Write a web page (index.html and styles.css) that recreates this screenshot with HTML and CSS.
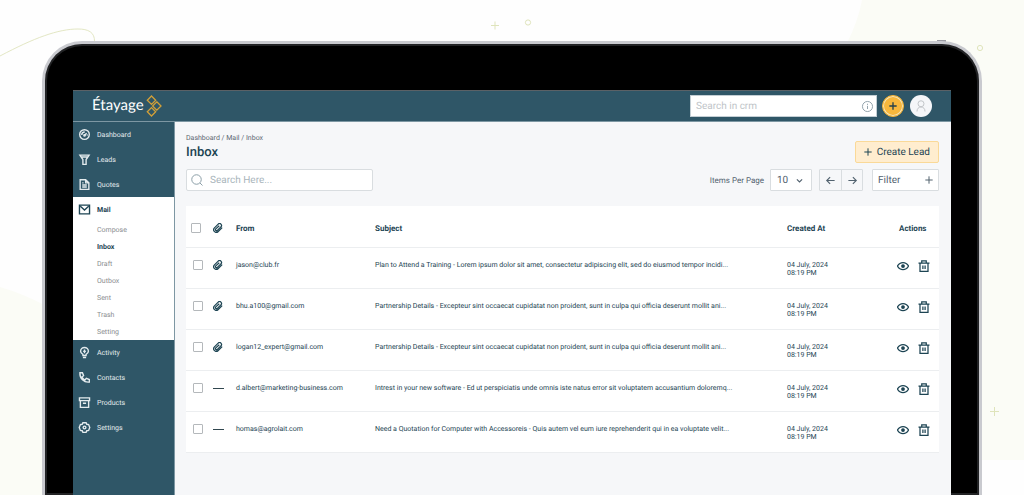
FILE: index.html
```html
<!DOCTYPE html>
<html lang="en">
<head>
<meta charset="utf-8">
<meta name="viewport" content="width=device-width, initial-scale=1">
<title>Inbox - Étayage</title>
<link rel="stylesheet" href="styles.css">
</head>
<body>
<svg class="symbols" aria-hidden="true">
  <symbol id="clip" viewBox="0 0 24 24"><path d="M22 11l-9.500 9.500a6.200 6.200 0 0 1-9-8.800l9-9a4.500 4.500 0 0 1 6.500 6.500l-8.500 8.500a2.500 2.500 0 0 1-3.800-3.500L15 6.500"/></symbol>
  <symbol id="eye" viewBox="0 0 24 24"><path d="M1 12C3.500 7.500 7 5 12 5s8.500 2.500 11 7c-2.500 4.500-6 7-11 7s-8.500-2.500-11-7z"/><circle cx="12" cy="12" r="2.500" fill="currentColor"/></symbol>
  <symbol id="trash" viewBox="0 0 24 24"><path d="M1 6h22M4 6v16.500h16V6M7.500 6V1.500h9V6M9.800 11v7M14.200 11v7"/></symbol>
  <symbol id="plus" viewBox="0 0 24 24"><path d="M12 1v22M1 12h22"/></symbol>
</svg>

<svg class="decor decor-left" viewBox="0 0 100 495" aria-hidden="true">
  <path class="tint" d="M0 287Q24 294 44 305V495H0z"/>
  <path class="curve" d="M0 56C34 38 58 29 78 29C88 29 95 32 94.500 42"/>
</svg>
<svg class="decor decor-top" viewBox="0 0 50 20" aria-hidden="true">
  <path class="mark" d="M8 6.500v8M4 10.500h8"/><circle class="mark" cx="41" cy="7.500" r="2.600"/>
</svg>
<svg class="decor decor-right" viewBox="0 0 180 495" aria-hidden="true">
  <path class="tint" d="M18 0Q14 22 2 45V460H180V0z"/>
  <circle class="mark" cx="136" cy="48" r="2.600"/><path class="mark" d="M150.500 407v9M146 411.500h9"/>
  <path class="key" d="M93 41h9"/>
</svg>

<div class="device">
<div class="screen">
  <header class="topbar">
    <a class="logo" href="#">
      <span>Étayage</span>
      <svg viewBox="0 0 16 22" aria-hidden="true"><path d="M5.500 1l4.200 4.200-4.200 4.200-4.200-4.200zM10.800 6.800l4.200 4.200-4.200 4.200-4.200-4.200zM5.500 12.600l4.200 4.200-4.200 4.200-4.200-4.200z"/></svg>
    </a>
    <div class="top-tools">
      <div class="crm-search">
        <input type="text" placeholder="Search in crm" aria-label="Search in crm">
        <svg class="icon" viewBox="0 0 24 24" aria-hidden="true"><circle cx="12" cy="12" r="11"/><path d="M12 10.500v7M12 6v2.500"/></svg>
      </div>
      <button class="round add" aria-label="Add"><svg class="icon"><use href="#plus"/></svg></button>
      <button class="round user" aria-label="Profile"><svg class="icon" viewBox="0 0 24 24" aria-hidden="true"><circle cx="12" cy="7.500" r="6"/><path d="M4 23c0-5.500 3-9 8-9s8 3.500 8 9"/></svg></button>
    </div>
  </header>

  <div class="body">
    <nav class="sidebar" aria-label="Main">
      <a class="item" href="#"><svg class="icon" viewBox="0 0 24 24"><circle cx="12" cy="12" r="10.500"/><path d="M12 14l4.500-5M6 13c0-4 2.500-6.500 6.500-6.500M18 12v2"/><circle cx="12" cy="14" r="1.500"/></svg>Dashboard</a>
      <a class="item" href="#"><svg class="icon" viewBox="0 0 24 24"><path d="M2 2.500h20L15.500 12V22.500h-7V12zM5 6.500h14"/></svg>Leads</a>
      <a class="item" href="#"><svg class="icon" viewBox="0 0 24 24"><path d="M2.500 1.500h12l7 7v14h-19zM14.500 2v6.500H21M7 8.500h3M7 13h10M7 17.500h10"/></svg>Quotes</a>
      <div class="group">
        <a class="item current" href="#"><svg class="icon" viewBox="0 0 24 24"><path d="M1 2.500h22v19H1zM3 5l9 8 9-8"/></svg>Mail</a>
        <div class="sub">
          <a href="#">Compose</a>
          <a class="active" href="#" aria-current="page">Inbox</a>
          <a href="#">Draft</a>
          <a href="#">Outbox</a>
          <a href="#">Sent</a>
          <a href="#">Trash</a>
          <a href="#">Setting</a>
        </div>
      </div>
      <a class="item" href="#"><svg class="icon" viewBox="0 0 24 24"><path d="M8.500 18.500v-2.500C5 14.500 3.500 12 3.500 9.500a8.500 8.500 0 0 1 17 0c0 2.500-1.500 5-5 6.500v2.500zM8.500 23h7M12 5.500v8M9 9.500h6"/></svg>Activity</a>
      <a class="item" href="#"><svg class="icon" viewBox="0 0 24 24"><path d="M2 1.500h5.500l2.500 6.500-3.500 3c1.500 3 3.500 5 6.500 6.500l3-3.500 6.500 2.500V22C11 23.500 1 14 2 1.500z"/></svg>Contacts</a>
      <a class="item" href="#"><svg class="icon" viewBox="0 0 24 24"><path d="M1 2h22v6H1zM3 8v14.500h18V8M8.500 13.500h7"/></svg>Products</a>
      <a class="item" href="#"><svg class="icon" viewBox="0 0 24 24"><path d="M8.500 1.500h7L17 5l4 .5 2.500 6.500-2.500 6.500-4 .5-1.500 3.500h-7L7 19l-4-.5L.5 12 3 5.500 7 5z"/><circle cx="12" cy="12" r="3"/></svg>Settings</a>
    </nav>

    <main class="content">
      <div class="head">
        <div>
          <div class="crumbs"><a href="#">Dashboard</a> / <a href="#">Mail</a> / <a href="#">Inbox</a></div>
          <h1>Inbox</h1>
        </div>
        <button class="create"><svg class="icon"><use href="#plus"/></svg>Create Lead</button>
      </div>

      <div class="toolbar">
        <div class="search">
          <svg class="icon" viewBox="0 0 24 24" aria-hidden="true"><circle cx="11" cy="11" r="9.500"/><path d="M18 18l5 5"/></svg>
          <input type="text" placeholder="Search Here..." aria-label="Search Here">
        </div>
        <label class="per-page" for="per-page">Items Per Page</label>
        <div class="select">
          <select id="per-page"><option>10</option><option>25</option><option>50</option></select>
          <svg class="icon" viewBox="0 0 24 24" aria-hidden="true"><path d="M3 8l9 9 9-9"/></svg>
        </div>
        <div class="pager">
          <button aria-label="Previous page"><svg class="icon" viewBox="0 0 24 24"><path d="M23 12H2M11 3l-9 9 9 9"/></svg></button>
          <button aria-label="Next page"><svg class="icon" viewBox="0 0 24 24"><path d="M1 12h21M13 3l9 9-9 9"/></svg></button>
        </div>
        <button class="filter">Filter<svg class="icon"><use href="#plus"/></svg></button>
      </div>

      <table class="mails">
        <colgroup><col class="c-check"><col class="c-clip"><col class="c-from"><col><col class="c-date"><col class="c-actions"></colgroup>
        <thead>
          <tr>
            <th><input type="checkbox" aria-label="Select all"></th>
            <th><svg class="icon clip" role="img" aria-label="Attachment"><use href="#clip"/></svg></th>
            <th>From</th><th>Subject</th><th>Created At</th><th>Actions</th>
          </tr>
        </thead>
        <tbody>
          <tr>
            <td><input type="checkbox" aria-label="Select mail from jason@club.fr"></td>
            <td><svg class="icon clip"><use href="#clip"/></svg></td>
            <td class="text">jason@club.fr</td>
            <td class="text">Plan to Attend a Training - Lorem ipsum dolor sit amet, consectetur adipiscing elit, sed do eiusmod tempor incidi...</td>
            <td class="text">04 July, 2024<br>08:19 PM</td>
            <td><div class="actions"><button aria-label="View"><svg class="icon"><use href="#eye"/></svg></button><button aria-label="Delete"><svg class="icon"><use href="#trash"/></svg></button></div></td>
          </tr>
          <tr>
            <td><input type="checkbox" aria-label="Select mail from bhu.a100@gmail.com"></td>
            <td><svg class="icon clip"><use href="#clip"/></svg></td>
            <td class="text">bhu.a100@gmail.com</td>
            <td class="text">Partnership Details - Excepteur sint occaecat cupidatat non proident, sunt in culpa qui officia deserunt mollit ani...</td>
            <td class="text">04 July, 2024<br>08:19 PM</td>
            <td><div class="actions"><button aria-label="View"><svg class="icon"><use href="#eye"/></svg></button><button aria-label="Delete"><svg class="icon"><use href="#trash"/></svg></button></div></td>
          </tr>
          <tr>
            <td><input type="checkbox" aria-label="Select mail from logan12_expert@gmail.com"></td>
            <td><svg class="icon clip"><use href="#clip"/></svg></td>
            <td class="text">logan12_expert@gmail.com</td>
            <td class="text">Partnership Details - Excepteur sint occaecat cupidatat non proident, sunt in culpa qui officia deserunt mollit ani...</td>
            <td class="text">04 July, 2024<br>08:19 PM</td>
            <td><div class="actions"><button aria-label="View"><svg class="icon"><use href="#eye"/></svg></button><button aria-label="Delete"><svg class="icon"><use href="#trash"/></svg></button></div></td>
          </tr>
          <tr>
            <td><input type="checkbox" aria-label="Select mail from d.albert@marketing-business.com"></td>
            <td><span class="dash"></span></td>
            <td class="text">d.albert@marketing-business.com</td>
            <td class="text">Intrest in your new software - Ed ut perspiciatis unde omnis iste natus error sit voluptatem accusantium doloremq...</td>
            <td class="text">04 July, 2024<br>08:19 PM</td>
            <td><div class="actions"><button aria-label="View"><svg class="icon"><use href="#eye"/></svg></button><button aria-label="Delete"><svg class="icon"><use href="#trash"/></svg></button></div></td>
          </tr>
          <tr>
            <td><input type="checkbox" aria-label="Select mail from homas@agrolait.com"></td>
            <td><span class="dash"></span></td>
            <td class="text">homas@agrolait.com</td>
            <td class="text">Need a Quotation for Computer with Accessoreis - Quis autem vel eum iure reprehenderit qui in ea voluptate velit...</td>
            <td class="text">04 July, 2024<br>08:19 PM</td>
            <td><div class="actions"><button aria-label="View"><svg class="icon"><use href="#eye"/></svg></button><button aria-label="Delete"><svg class="icon"><use href="#trash"/></svg></button></div></td>
          </tr>
        </tbody>
      </table>
    </main>
  </div>
</div>
</div>
</body>
</html>
```

FILE: styles.css
```css
:root {
  --teal: #2f5667;
  --ink: #1d4453;
  --slate: #52626f;
  --line: #d9dde0;
  --canvas: #f6f7f9;
}

* { box-sizing: border-box; }

body {
  margin: 0;
  min-height: 100vh;
  padding: 41px 42px 0;
  display: flex;
  position: relative;
  overflow-x: hidden;
  background: #fefefe;
  font-family: Roboto, "Liberation Sans", sans-serif;
  font-size: 7px;
  text-rendering: geometricPrecision;
  color: var(--ink);
}

a { color: inherit; text-decoration: none; }

button, input, select {
  font: inherit;
  color: inherit;
  text-rendering: inherit;
  margin: 0;
  padding: 0;
  border: 0;
  background: none;
}

.symbols { position: absolute; width: 0; height: 0; }

.icon {
  display: block;
  flex: none;
  width: 12px;
  height: 12px;
  fill: none;
  stroke: currentColor;
  stroke-width: 2;
  overflow: visible;
}

/* Background drawing */
.decor { position: absolute; top: 0; fill: none; }
.decor-left { left: 0; width: 100px; height: 495px; }
.decor-top { left: calc(50% - 25px); top: 15px; width: 50px; height: 20px; }
.decor-right { right: 0; width: 180px; height: 495px; }
.tint { fill: #fbfcf6; }
.curve { stroke: #e3e7c4; stroke-width: 1; }
.mark { stroke: #dfe4bb; stroke-width: 1; }
.key { stroke: #9a9aa2; stroke-width: 2; }

/* Laptop frame */
.device {
  position: relative;
  flex: 1;
  display: flex;
  padding: 44px 26px 0;
  background: #000;
  border: 3px solid #c9cacf;
  border-bottom: 0;
  border-radius: 40px 40px 0 0;
  box-shadow: inset 0 0 0 2px #222325;
}

.screen {
  flex: 1;
  min-width: 0;
  display: flex;
  flex-direction: column;
  margin: 2px 2px 0;
  background: var(--canvas);
}

.topbar {
  display: flex;
  align-items: center;
  justify-content: space-between;
  height: 32px;
  padding: 0 19px;
  background: var(--teal);
  border-top: 1px solid #5b6166;
  border-bottom: 1px solid #7d97a3;
}

.logo {
  display: flex;
  align-items: center;
  gap: 2px;
  font-family: Lato, sans-serif;
  font-size: 15px;
  line-height: 18px;
  color: #fff;
}
.logo span { padding-bottom: 2px; }
.logo svg { width: 16px; height: 22px; fill: none; stroke: #d3a038; stroke-width: 1.3; }

.top-tools { display: flex; align-items: center; gap: 5px; }

.crm-search {
  display: flex;
  align-items: center;
  width: 187px;
  height: 22px;
  padding: 0 3px 0 5px;
  background: #fff;
  border: 1px solid #c3ced4;
  color: #8b9ba5;
}
.crm-search input { flex: 1; min-width: 0; font-size: 10px; outline: 0; }
.crm-search input::placeholder { color: #c0c4c8; opacity: 1; }
.crm-search .icon { width: 11px; height: 11px; }

.round {
  display: grid;
  place-items: center;
  width: 22px;
  height: 22px;
  border-radius: 50%;
}
.add { background: #f8b73c; border: 1px solid #f8b73c; box-shadow: inset 0 0 0 1px #f3e5c2; color: #23404b; }
.add .icon { width: 8px; height: 8px; stroke-width: 4; }
.user { margin-left: 1px; background: #f5f6f9; color: #c3c6ca; }

.body { flex: 1; display: flex; }

/* Sidebar */
.sidebar {
  flex: none;
  width: 102px;
  background: var(--teal);
  border-right: 1px solid #7d97a3;
  color: #e4ebee;
}
.item {
  display: flex;
  align-items: center;
  gap: 7px;
  height: 25px;
  padding-left: 6px;
}
.item .icon { width: 11px; height: 11px; stroke-width: 3; }
.group { background: #fff; }
.current { font-weight: 700; color: var(--ink); }
.sub {
  display: grid;
  grid-auto-rows: 1fr;
  height: 118px;
  padding-left: 24px;
  align-items: center;
  color: #8a8d90;
}
.sub .active { font-weight: 700; color: var(--ink); }

/* Content */
.content { flex: 1; min-width: 0; padding: 11px 12px 0 11px; }

.head { display: flex; justify-content: space-between; align-items: flex-end; }
.crumbs { line-height: 11px; color: #5d6873; }
h1 { margin: 0 0 2px; font-size: 13px; font-weight: 500; line-height: 17px; }

.create {
  display: flex;
  align-items: center;
  gap: 5px;
  height: 22px;
  padding: 0 8px;
  background: #ffedcf;
  border: 1px solid #fad998;
  border-radius: 2px;
  font-size: 10px;
}
.create .icon { width: 8px; height: 8px; stroke-width: 3; }

.toolbar {
  display: flex;
  align-items: center;
  margin: 6px 0 15px;
  color: var(--slate);
}
.search {
  display: flex;
  align-items: center;
  gap: 7px;
  width: 187px;
  height: 22px;
  margin-right: auto;
  padding-left: 4px;
  background: #fff;
  border: 1px solid var(--line);
  border-radius: 2px;
  color: #8c9fa8;
}
.search input { flex: 1; min-width: 0; font-size: 10px; outline: 0; }
.search input::placeholder { color: #a9b5bb; opacity: 1; }

.per-page { font-size: 8px; }
.select { display: grid; align-items: center; width: 42px; margin: 0 7px 0 6px; }
.select select {
  grid-area: 1 / 1;
  appearance: none;
  height: 22px;
  padding-left: 6px;
  background: #fff;
  border: 1px solid var(--line);
  border-radius: 1px;
  font-size: 10px;
}
.select .icon {
  grid-area: 1 / 1;
  justify-self: end;
  width: 7px;
  height: 7px;
  margin-right: 9px;
  stroke-width: 4;
  pointer-events: none;
}

.pager { display: flex; border: 1px solid var(--line); border-radius: 1px; margin-right: 9px; }
.pager button { display: grid; place-items: center; width: 21px; height: 20px; }
.pager button + button { border-left: 1px solid var(--line); }
.pager .icon { width: 9px; height: 9px; stroke-width: 3; }

.filter {
  display: flex;
  align-items: center;
  justify-content: space-between;
  width: 67px;
  height: 22px;
  padding: 0 5px;
  background: #fff;
  border: 1px solid var(--line);
  border-radius: 1px;
  font-size: 10px;
}
.filter .icon { width: 8px; height: 8px; stroke-width: 3; }

/* Mail table */
.mails {
  width: 100%;
  table-layout: fixed;
  border-collapse: separate;
  border-spacing: 0;
  background: #fff;
}
.c-check { width: 27px; }
.c-clip { width: 23px; }
.c-from { width: 139px; }
.c-date { width: 110px; }
.c-actions { width: 42px; }

th, td {
  height: 41px;
  padding: 0;
  border-bottom: 1px solid #eceef0;
  text-align: left;
  white-space: nowrap;
}
th { height: 42px; padding-top: 3px; font-size: 8px; font-weight: 700; vertical-align: middle; }
th:first-child { padding-left: 5px; }
th:last-child { padding-left: 2px; }
td { padding-top: 12px; line-height: 8px; vertical-align: top; }
td:first-child { padding-left: 7px; }
.text { padding-top: 13px; }

.mails input {
  display: block;
  appearance: none;
  width: 10px;
  height: 10px;
  border: 1px solid #b4b8bb;
  border-radius: 1px;
  background: #fff;
}
.clip { width: 10px; height: 10px; stroke-width: 3; }
.dash { display: block; width: 11px; height: 1px; margin-top: 5px; background: #31474f; }
.actions { display: flex; gap: 9px; }
.actions .icon { stroke-width: 2.500; }
```
